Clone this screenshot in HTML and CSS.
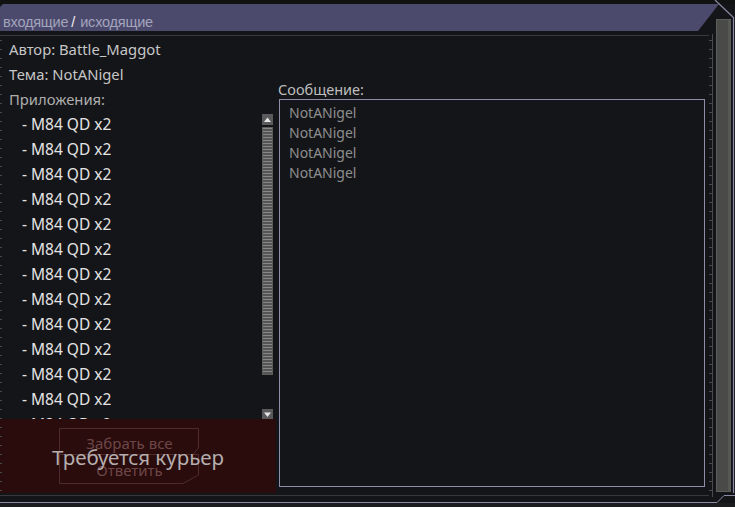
FILE: index.html
```html
<!DOCTYPE html>
<html lang="ru">
<head>
<meta charset="utf-8">
<link rel="stylesheet" href="styles.css">
</head>
<body>
<div class="page">
  <div class="topstrip"></div>
  <div class="tabs"><span class="tab">входящие</span><span class="slash">/</span><span class="tab">исходящие</span></div>
  <div class="sep"></div>
  <div class="content">
    <div class="left">
      <div class="row">Автор: Battle_Maggot</div>
      <div class="row">Тема: NotANigel</div>
      <div class="row dim">Приложения:</div>
      <div class="listwrap">
        <div class="list">
          <div class="item">- M84 QD x2</div>
          <div class="item">- M84 QD x2</div>
          <div class="item">- M84 QD x2</div>
          <div class="item">- M84 QD x2</div>
          <div class="item">- M84 QD x2</div>
          <div class="item">- M84 QD x2</div>
          <div class="item">- M84 QD x2</div>
          <div class="item">- M84 QD x2</div>
          <div class="item">- M84 QD x2</div>
          <div class="item">- M84 QD x2</div>
          <div class="item">- M84 QD x2</div>
          <div class="item">- M84 QD x2</div>
          <div class="item">- M84 QD x2</div>
          <div class="item">- M84 QD x2</div>
          <div class="item">- M84 QD x2</div>
        </div>
        <div class="scrollbar">
          <div class="sbtn"><svg width="11" height="11" viewBox="0 0 11 11"><path d="M2 8 L5.5 3.5 L9 8 Z" fill="#e6e6e6"/></svg></div>
          <div class="track"></div>
          <div class="sgap"></div>
          <div class="sbtn"><svg width="11" height="11" viewBox="0 0 11 11"><path d="M2 3.5 L5.5 8 L9 3.5 Z" fill="#e6e6e6"/></svg></div>
        </div>
      </div>
      <div class="overlay">
        <div class="btns">
          <div class="btn btn-top">
            <svg class="frame" width="141" height="27" viewBox="0 0 141 27"><path d="M0.5 0.5 H139.5 V20 L134 26.5 H0.5 Z" fill="none" stroke="#4f2b2c"/></svg>
            <span>Забрать все</span>
          </div>
          <div class="btn btn-bot">
            <svg class="frame" width="141" height="30" viewBox="0 0 141 30"><path d="M0.5 0.5 H139.5 V21 L124 29.5 H0.5 Z" fill="none" stroke="#4f2b2c"/></svg>
            <span>Ответить</span>
          </div>
        </div>
        <div class="courier">Требуется курьер</div>
      </div>
    </div>
    <div class="right">
      <div class="label">Сообщение:</div>
      <div class="msgbox">
        <div class="msg">NotANigel</div>
        <div class="msg">NotANigel</div>
        <div class="msg">NotANigel</div>
        <div class="msg">NotANigel</div>
      </div>
    </div>
  </div>
  <svg class="deco" width="735" height="507" viewBox="0 0 735 507">
    <g stroke="#4a4a4c" stroke-width="1">
      <path d="M0 40.5h2M0 49.5h2M0 58.5h2M0 67.5h2M0 76.5h2M0 85.5h2M0 94.5h2M0 103.5h2M0 112.5h2M0 121.5h2M0 130.5h2M0 139.5h2M0 148.5h2M0 157.5h2M0 166.5h2M0 175.5h2M0 184.5h2M0 193.5h2M0 202.5h2M0 211.5h2M0 220.5h2M0 229.5h2M0 238.5h2M0 247.5h2M0 256.5h2M0 265.5h2M0 274.5h2M0 283.5h2M0 292.5h2M0 301.5h2M0 310.5h2M0 319.5h2M0 328.5h2M0 337.5h2M0 346.5h2M0 355.5h2M0 364.5h2M0 373.5h2M0 382.5h2M0 391.5h2M0 400.5h2M0 409.5h2M0 418.5h2M0 427.5h2M0 436.5h2M0 445.5h2M0 454.5h2M0 463.5h2M0 472.5h2M0 481.5h2M0 490.5h2"/>
      <path d="M712.5 34V497"/>
      <path d="M709 40.5h3M709 49.5h3M709 58.5h3M709 67.5h3M709 76.5h3M709 85.5h3M709 94.5h3M709 103.5h3M709 112.5h3M709 121.5h3M709 130.5h3M709 139.5h3M709 148.5h3M709 157.5h3M709 166.5h3M709 175.5h3M709 184.5h3M709 193.5h3M709 202.5h3M709 211.5h3M709 220.5h3M709 229.5h3M709 238.5h3M709 247.5h3M709 256.5h3M709 265.5h3M709 274.5h3M709 283.5h3M709 292.5h3M709 301.5h3M709 310.5h3M709 319.5h3M709 328.5h3M709 337.5h3M709 346.5h3M709 355.5h3M709 364.5h3M709 373.5h3M709 382.5h3M709 391.5h3M709 400.5h3M709 409.5h3M709 418.5h3M709 427.5h3M709 436.5h3M709 445.5h3M709 454.5h3M709 463.5h3M709 472.5h3M709 481.5h3M709 490.5h3"/>
      <path d="M0 495.5H709" stroke="#38383a"/>
    </g>
    <rect x="0" y="503" width="735" height="4" fill="#1b1c1e"/>
    <rect x="716.5" y="19.5" width="14" height="472" fill="#4a4b48" stroke="#5c5d5a"/>
    <path d="M729 20V491" stroke="#62635f" stroke-width="1"/>
    <path d="M715 0 L733.5 17.5 V493" fill="none" stroke="#8a8aa6" stroke-width="1.2"/>
    <path d="M0 502.5 H717 L724 495.5 H735" fill="none" stroke="#8a8aa6" stroke-width="1"/>
  </svg>
</div>
</body>
</html>
```
FILE: styles.css
```css
* { box-sizing: border-box; }
html, body { margin: 0; padding: 0; }
body {
  background: #141518;
  font-family: "Noto Sans", "Open Sans", sans-serif;
  overflow: hidden;
}
.page {
  position: relative;
  width: 735px;
  height: 507px;
  overflow: hidden;
  background: #141518;
}
.topstrip {
  height: 4px;
  background: #111313;
}
.tabs {
  width: 719px;
  height: 27px;
  background: #4b4a6d;
  clip-path: polygon(3px 0, 719px 0, 698px 100%, 0 100%, 0 3px);
  display: flex;
  align-items: flex-end;
  padding: 0 0 1px 3px;
  font-family: "Liberation Sans", sans-serif;
  font-size: 14.5px;
  line-height: 16px;
  color: #a4a4bc;
  letter-spacing: -0.2px;
}
.slash {
  color: #f0f0f0;
  margin: 0 5px 0 3px;
}
.sep {
  width: 709px;
  height: 1px;
  margin-top: 4px;
  background: #3a3a3d;
}
.content {
  display: flex;
  height: 457px;
  margin-top: 1px;
}
.left {
  position: relative;
  width: 276px;
  flex: none;
  display: flex;
  flex-direction: column;
}
.row {
  height: 25px;
  line-height: 24px;
  padding-left: 9px;
  font-size: 14.8px;
  color: #c6c6c6;
}
.row.dim { color: #aeaeae; }
.listwrap {
  display: flex;
  flex: 1;
  min-height: 0;
}
.list {
  width: 262px;
  padding-left: 22px;
  overflow: hidden;
}
.item {
  height: 25px;
  line-height: 25px;
  font-size: 15.5px;
  color: #e4e4e4;
}
.scrollbar {
  width: 11px;
  margin-top: 2px;
  display: flex;
  flex-direction: column;
  height: 306px;
}
.sbtn {
  width: 11px;
  height: 11px;
  background: #5a5a5c;
  display: flex;
}
.track {
  margin-top: 2px;
  height: 248px;
  border: 1px solid #5e5e5e;
  background: repeating-linear-gradient(to bottom, #878787 0, #878787 1px, #555555 1px, #555555 3px);
}
.sgap { flex: 1; }
.overlay {
  position: absolute;
  left: 0;
  top: 382px;
  width: 276px;
  height: 74px;
  background: #2a0c0d;
}
.btns {
  position: absolute;
  left: 59px;
  top: 9px;
  width: 141px;
}
.btn {
  position: relative;
  width: 141px;
  display: flex;
  align-items: center;
  justify-content: center;
  font-size: 15px;
  color: #6d4747;
  padding-top: 2px;
}
.btn-top { height: 27px; }
.btn-bot { height: 30px; margin-top: -1px; }
.btn span { position: relative; }
.frame {
  position: absolute;
  left: 0;
  top: 0;
}
.courier {
  position: absolute;
  left: 0;
  width: 276px;
  top: 24px;
  text-align: center;
  font-size: 20.5px;
  line-height: 28px;
  color: #b6aeae;
}
.right {
  width: 428px;
  flex: none;
  padding-left: 2px;
  padding-top: 42px;
}
.label {
  height: 20px;
  line-height: 20px;
  font-size: 14.5px;
  color: #bebebe;
}
.msgbox {
  width: 426px;
  height: 388px;
  margin-left: 1px;
  border: 1px solid #8e8ea8;
  padding: 3px 0 0 9px;
}
.msg {
  height: 20px;
  line-height: 20px;
  font-size: 14px;
  color: #8e8e8e;
}
.deco {
  position: absolute;
  left: 0;
  top: 0;
  pointer-events: none;
}
```
